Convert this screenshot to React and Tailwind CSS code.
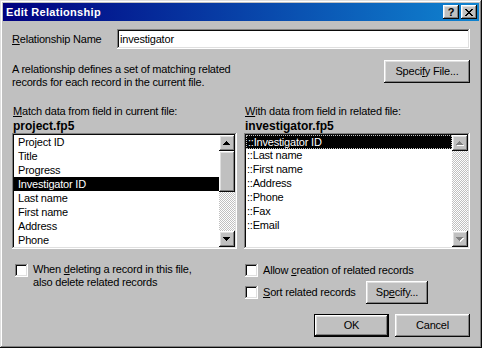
import React from 'react'

const raised = 'bg-[#c0c0c0] shadow-[inset_-1px_-1px_#0a0a0a,inset_1px_1px_#ffffff,inset_-2px_-2px_#808080,inset_2px_2px_#dfdfdf]'
const sunken = 'shadow-[inset_-1px_-1px_#ffffff,inset_1px_1px_#808080,inset_-2px_-2px_#dfdfdf,inset_2px_2px_#0a0a0a]'
const dither = 'bg-[conic-gradient(#ffffff_25%,#c0c0c0_0_50%,#ffffff_0_75%,#c0c0c0_0)] bg-size-[2px_2px]'

const leftFields = ['Project ID', 'Title', 'Progress', 'Investigator ID', 'Last name', 'First name', 'Address', 'Phone']
const rightFields = ['::Investigator ID', '::Last name', '::First name', '::Address', '::Phone', '::Fax', '::Email']

function Arrow({ up, disabled }) {
  const d = up
    ? 'M3 0h1v1h-1z M2 1h3v1h-3z M1 2h5v1h-5z M0 3h7v1h-7z'
    : 'M0 0h7v1h-7z M1 1h5v1h-5z M2 2h3v1h-3z M3 3h1v1h-1z'
  return (
    <div className={`w-[16px] h-[16px] flex items-center justify-center ${raised}`}>
      <svg width="8" height="5" viewBox="0 0 8 5" shapeRendering="crispEdges">
        {disabled && <path d={d} fill="#ffffff" transform="translate(1 1)" />}
        <path d={d} fill={disabled ? '#808080' : '#000000'} />
      </svg>
    </div>
  )
}

function ScrollBar({ disabled }) {
  return (
    <div className={`w-[16px] shrink-0 flex flex-col ${dither}`}>
      <Arrow up disabled={disabled} />
      <div className="flex-1">
        {!disabled && <div className={`h-[41px] ${raised}`} />}
      </div>
      <Arrow disabled={disabled} />
    </div>
  )
}

function Check() {
  return <div className={`w-[13px] h-[13px] shrink-0 bg-white ${sunken}`} />
}

export default function App() {
  return (
    <div className="w-[482px] h-[348px] bg-[#c0c0c0] p-[3px] flex flex-col text-black font-['Liberation_Sans',Arial,sans-serif] text-[11px] leading-[13px] tracking-[-0.2px] shadow-[inset_-1px_-1px_#0a0a0a,inset_1px_1px_#dfdfdf,inset_-2px_-2px_#808080,inset_2px_2px_#ffffff]">
      {/* Title bar */}
      <div className="h-[18px] shrink-0 flex items-center pl-[3px] pr-[2px] bg-[linear-gradient(90deg,#000080,#1084d0)]">
        <span className="text-white font-bold tracking-[0.3px]">Edit Relationship</span>
        <div className="ml-auto flex gap-[2px]">
          <div className={`w-[16px] h-[14px] flex items-center justify-center font-bold text-[11px] leading-none ${raised}`}>?</div>
          <div className={`w-[16px] h-[14px] flex items-center justify-center ${raised}`}>
            <svg width="8" height="7" viewBox="0 0 8 7" shapeRendering="crispEdges">
              <path d="M0 0h2v1h-2z M6 0h2v1h-2z M1 1h2v1h-2z M5 1h2v1h-2z M2 2h4v1h-4z M3 3h2v1h-2z M2 4h4v1h-4z M1 5h2v1h-2z M5 5h2v1h-2z M0 6h2v1h-2z M6 6h2v1h-2z" fill="#000" />
            </svg>
          </div>
        </div>
      </div>

      <div className="flex-1 flex flex-col pl-[9px] pr-[9px]">
        {/* Name */}
        <div className="mt-[8px] h-[20px] flex items-center">
          <span className="w-[105px] shrink-0"><span className="underline underline-offset-1">R</span>elationship Name</span>
          <div className={`flex-1 h-[20px] bg-white flex items-center pl-[3px] ${sunken}`}>investigator</div>
        </div>

        {/* Description */}
        <div className="mt-[11px] flex items-start justify-between">
          <p className="mt-[3px]">A relationship defines a set of matching related<br />records for each record in the current file.</p>
          <div className={`w-[86px] h-[23px] flex items-center justify-center ${raised}`}>
            Speci<span className="underline underline-offset-1">f</span>y File...
          </div>
        </div>

        {/* Lists */}
        <div className="mt-[16px] grid grid-cols-[225px_226px] gap-x-[7px]">
          <div className="flex flex-col">
            <span className="pl-[1px]"><span className="underline underline-offset-1">M</span>atch data from field in current file:</span>
            <span className="mt-[1px] pl-[1px] text-[12px] leading-[14px] font-bold tracking-[0px]">project.fp5</span>
            <div className={`h-[116px] bg-white p-[2px] flex ${sunken}`}>
              <div className="flex-1 flex flex-col">
                {leftFields.map(f => (
                  <div key={f} className={`h-[14px] leading-[14px] pl-[4px] ${f === 'Investigator ID' ? 'bg-black text-white' : ''}`}>{f}</div>
                ))}
              </div>
              <ScrollBar />
            </div>
          </div>
          <div className="flex flex-col">
            <span className="pl-[1px]"><span className="underline underline-offset-1">W</span>ith data from field in related file:</span>
            <span className="mt-[1px] pl-[1px] text-[12px] leading-[14px] font-bold tracking-[0px]">investigator.fp5</span>
            <div className={`h-[116px] bg-white p-[2px] flex ${sunken}`}>
              <div className="flex-1 flex flex-col">
                {rightFields.map((f, i) => (
                  <div key={f} className={`h-[14px] leading-[12px] pl-[1px] ${i === 0 ? 'bg-black text-white border border-dotted border-[#c0c0c0]' : ''}`}>{f}</div>
                ))}
              </div>
              <ScrollBar disabled />
            </div>
          </div>
        </div>

        {/* Options */}
        <div className="mt-[15px] grid grid-cols-[225px_226px] gap-x-[7px]">
          <div className="flex items-start gap-[5px] pl-[3px]">
            <Check />
            <p className="-mt-[1px]">When <span className="underline underline-offset-1">d</span>eleting a record in this file,<br />also delete related records</p>
          </div>
          <div className="flex flex-col pl-[1px]">
            <div className="flex items-center gap-[5px] h-[13px]">
              <Check />
              <span>Allow <span className="underline underline-offset-1">c</span>reation of related records</span>
            </div>
            <div className="mt-[4px] h-[23px] flex items-center">
              <Check />
              <span className="ml-[5px] w-[103px]"><span className="underline underline-offset-1">S</span>ort related records</span>
              <div className={`w-[62px] h-[23px] flex items-center justify-center ${raised}`}>
                Sp<span className="underline underline-offset-1">e</span>cify...
              </div>
            </div>
          </div>
        </div>

        {/* Buttons */}
        <div className="mt-[10px] flex justify-end gap-[6px]">
          <div className="w-[75px] h-[23px] flex items-center justify-center bg-[#c0c0c0] shadow-[inset_0_0_0_1px_#000000,inset_-2px_-2px_#0a0a0a,inset_2px_2px_#ffffff,inset_-3px_-3px_#808080,inset_3px_3px_#dfdfdf]">OK</div>
          <div className={`w-[75px] h-[23px] flex items-center justify-center ${raised}`}>Cancel</div>
        </div>
      </div>
    </div>
  )
}
